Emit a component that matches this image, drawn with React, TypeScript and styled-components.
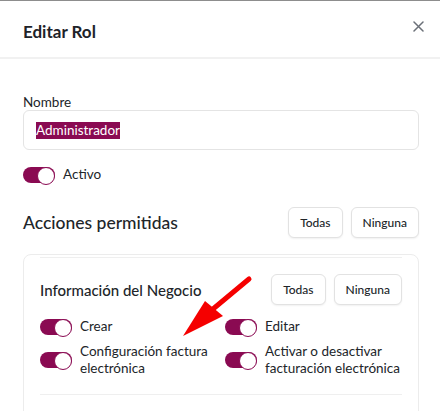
import React from "react";
import styled, { createGlobalStyle } from "styled-components";

const GlobalStyle = createGlobalStyle`
  html, body {
    margin: 0;
    padding: 0;
    background: #ffffff;
  }
  body {
    font-family: Lato, "Noto Sans", sans-serif;
    color: #212529;
  }
  * {
    box-sizing: border-box;
  }
`;

const ACCENT = "#8a0a52";

type Permission = { label: string; on: boolean };

const permissions: Permission[] = [
  { label: "Crear", on: true },
  { label: "Editar", on: true },
  { label: "Configuración factura electrónica", on: true },
  { label: "Activar o desactivar facturación electrónica", on: true },
];

const App = () => {
  return (
    <Modal>
      <GlobalStyle />
      <Header>
        <Title>Editar Rol</Title>
        <CloseButton aria-label="Cerrar">
          <svg width="11" height="11" viewBox="0 0 11 11">
            <path d="M1 1 L10 10 M10 1 L1 10" stroke="#6b7078" strokeWidth="1.5" strokeLinecap="round" />
          </svg>
        </CloseButton>
      </Header>
      <Body>
        <Label>Nombre</Label>
        <InputBox>
          <Selected>Administrador</Selected>
        </InputBox>
        <SwitchRow $top={16}>
          <Switch $on />
          <SwitchLabel>Activo</SwitchLabel>
        </SwitchRow>

        <SectionHead $top={24}>
          <SectionTitle>Acciones permitidas</SectionTitle>
          <ButtonGroup>
            <SmallButton>Todas</SmallButton>
            <SmallButton>Ninguna</SmallButton>
          </ButtonGroup>
        </SectionHead>

        <Card>
          <Group>
            <SectionHead $top={0}>
              <GroupTitle>Información del Negocio</GroupTitle>
              <ButtonGroup>
                <SmallButton>Todas</SmallButton>
                <SmallButton>Ninguna</SmallButton>
              </ButtonGroup>
            </SectionHead>
            <PermGrid>
              {permissions.map((p) => (
                <SwitchRow key={p.label} $top={0}>
                  <Switch $on={p.on} />
                  <SwitchLabel>{p.label}</SwitchLabel>
                </SwitchRow>
              ))}
            </PermGrid>
          </Group>
        </Card>
      </Body>

      <Arrow width="440" height="411" viewBox="0 0 440 411">
        <line x1="249" y1="278" x2="213" y2="308" stroke="#f50000" strokeWidth="5" strokeLinecap="round" />
        <polygon points="205,300 223,315 183,335" fill="#f50000" />
      </Arrow>
    </Modal>
  );
};

export default App;

const Modal = styled.div`
  position: relative;
  width: 440px;
  min-height: 411px;
  border-top: 1px solid #8d8d8d;
  background: #ffffff;
`;

const Header = styled.div`
  display: flex;
  justify-content: space-between;
  align-items: flex-start;
  padding: 19px 16px 13px 23px;
  border-bottom: 2px solid #f1f1f1;
`;

const Title = styled.h2`
  margin: 0;
  font-size: 17px;
  line-height: 24px;
  font-weight: 700;
  color: #1e2329;
`;

const CloseButton = styled.button`
  display: flex;
  align-items: center;
  justify-content: center;
  width: 11px;
  height: 11px;
  margin-top: 1px;
  padding: 0;
  border: none;
  background: none;
  cursor: pointer;
`;

const Body = styled.div`
  padding: 36px 21px 0 23px;
`;

const Label = styled.div`
  font-size: 13.5px;
  line-height: 15px;
  color: #212529;
`;

const InputBox = styled.div`
  display: flex;
  align-items: center;
  height: 40px;
  padding: 0 12px;
  border: 1px solid #e4e4e4;
  border-radius: 6px;
  font-size: 13.5px;
`;

const Selected = styled.span`
  background: ${ACCENT};
  color: #ffffff;
  line-height: 17px;
`;

const SwitchRow = styled.div<{ $top: number }>`
  display: flex;
  align-items: center;
  gap: 8px;
  margin-top: ${(p) => p.$top}px;
`;

const Switch = styled.span<{ $on?: boolean }>`
  position: relative;
  flex: 0 0 32px;
  width: 32px;
  height: 16px;
  border-radius: 8px;
  background: ${(p) => (p.$on ? ACCENT : "#d9d9d9")};

  &::after {
    content: "";
    position: absolute;
    top: 0;
    ${(p) => (p.$on ? "right: 0;" : "left: 0;")}
    width: 16px;
    height: 16px;
    border-radius: 50%;
    background: #ffffff;
    border: 1px solid ${ACCENT};
  }
`;

const SwitchLabel = styled.span`
  font-size: 13.5px;
  line-height: 17px;
  color: #212529;
`;

const SectionHead = styled.div<{ $top: number }>`
  display: flex;
  justify-content: space-between;
  align-items: center;
  margin-top: ${(p) => p.$top}px;
`;

const SectionTitle = styled.h3`
  margin: 0;
  font-size: 17.5px;
  font-weight: 500;
  color: #212529;
`;

const GroupTitle = styled.h4`
  margin: 0;
  font-size: 15px;
  font-weight: 500;
  color: #212529;
`;

const ButtonGroup = styled.div`
  display: flex;
  gap: 8px;
`;

const SmallButton = styled.button`
  height: 31px;
  padding: 0 11px;
  border: 1px solid #e2e2e2;
  border-radius: 6px;
  background: #ffffff;
  box-shadow: 0 1px 2px rgba(0, 0, 0, 0.06);
  font-family: inherit;
  font-size: 12px;
  font-weight: 500;
  color: #212529;
  cursor: pointer;
`;

const Card = styled.div`
  margin-top: 16px;
  padding: 2px 16px 30px;
  border: 1px solid #ececec;
  border-radius: 8px;
`;

const Group = styled.div`
  padding: 16px 0 17px;
  border-top: 1px solid #efefef;
  border-bottom: 1px solid #efefef;
`;

const PermGrid = styled.div`
  display: grid;
  grid-template-columns: 1fr 1fr;
  column-gap: 8px;
  row-gap: 8px;
  margin-top: 13px;
`;

const Arrow = styled.svg`
  position: absolute;
  top: 0;
  left: 0;
  pointer-events: none;
`;
